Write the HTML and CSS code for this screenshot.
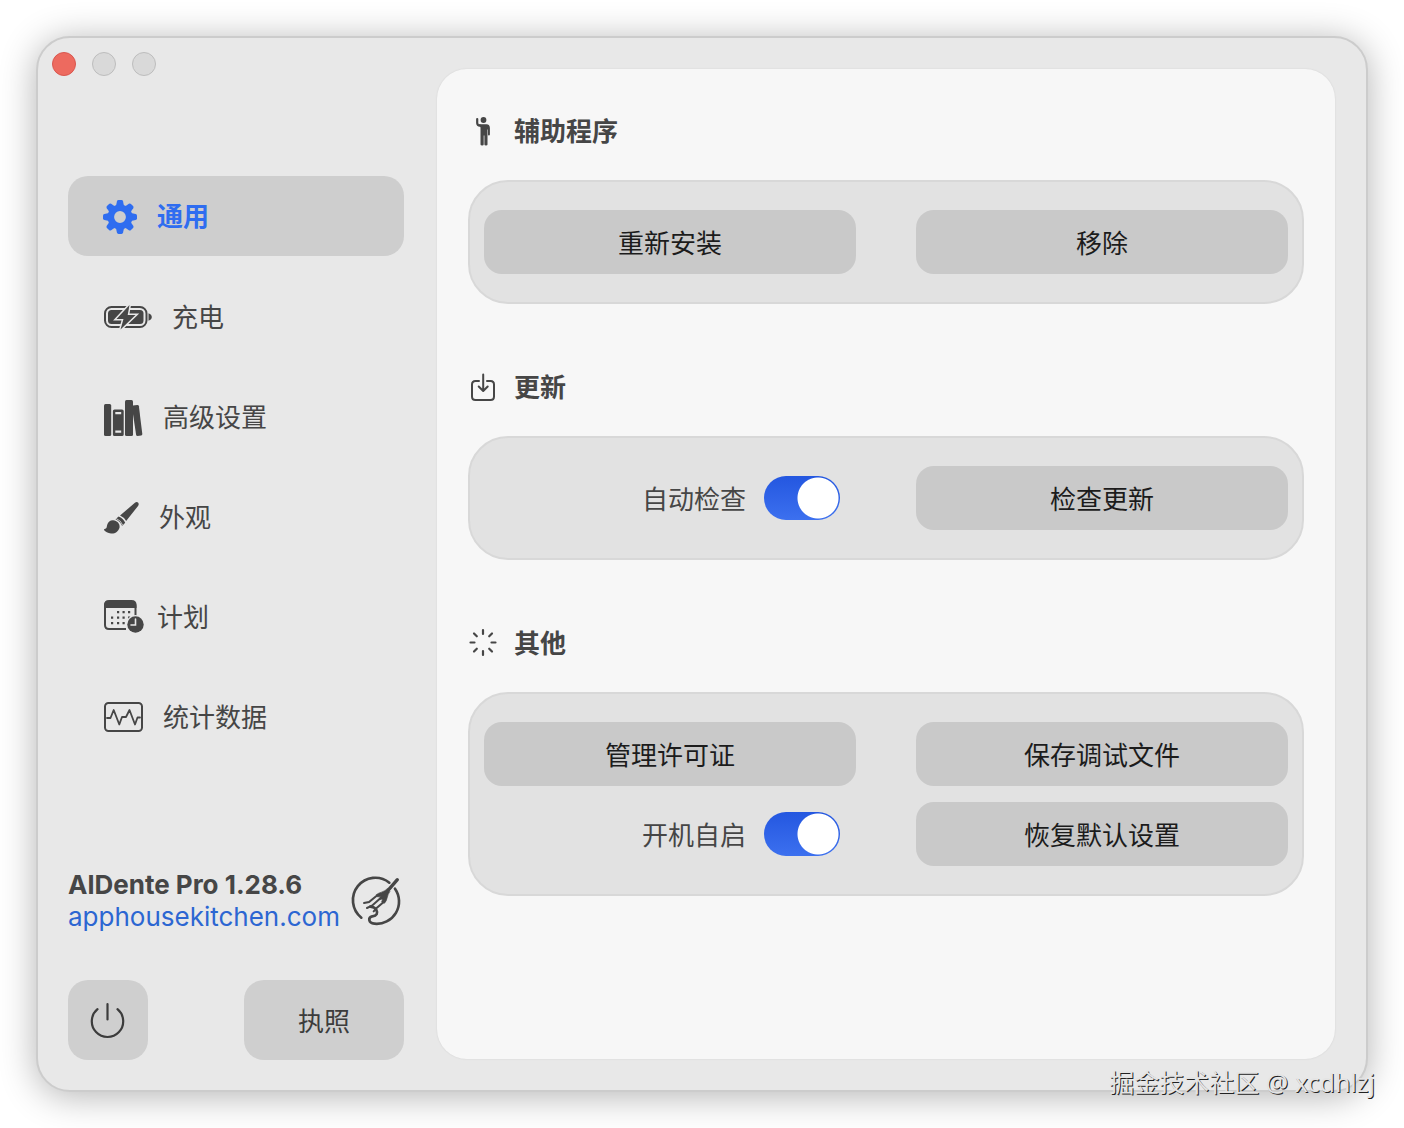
FILE: index.html
```html
<!DOCTYPE html>
<html lang="zh-CN">
<head>
    <meta charset="UTF-8">
    <meta name="viewport" content="width=device-width, initial-scale=1.0">
    <title>AlDente Pro</title>
    <link rel="stylesheet" href="styles.css">
</head>
<body>

    <div class="window">
        <aside class="sidebar">
            <div class="traffic-lights">
                <button class="light light-close" aria-label="关闭"></button>
                <button class="light" aria-label="最小化"></button>
                <button class="light" aria-label="缩放"></button>
            </div>

            <nav class="nav">
                <a href="#general" class="nav-item active">
                    <svg width="34" height="34" viewBox="0 0 34 34" fill="currentColor">
                        <path id="tooth" d="M13 6 L13.9 1.4 Q14.2 0 15.5 0 H18.5 Q19.8 0 20.1 1.4 L21 6 Z"/>
                        <use href="#tooth" transform="rotate(45 17 17)"/>
                        <use href="#tooth" transform="rotate(90 17 17)"/>
                        <use href="#tooth" transform="rotate(135 17 17)"/>
                        <use href="#tooth" transform="rotate(180 17 17)"/>
                        <use href="#tooth" transform="rotate(225 17 17)"/>
                        <use href="#tooth" transform="rotate(270 17 17)"/>
                        <use href="#tooth" transform="rotate(315 17 17)"/>
                        <circle cx="17" cy="17" r="9.2" fill="none" stroke="currentColor" stroke-width="6.6"/>
                    </svg>
                    <span>通用</span>
                </a>
                <a href="#charge" class="nav-item">
                    <svg width="48" height="24" viewBox="0 0 48 24">
                        <rect x="1" y="1" width="41.5" height="20" rx="6.5" fill="none" stroke="currentColor" stroke-width="2"/>
                        <rect x="4" y="4" width="35.5" height="14" rx="3.5" fill="currentColor"/>
                        <path d="M44.5 7.2 Q47.8 8.5 47.8 11 Q47.8 13.5 44.5 14.8 Z" fill="currentColor"/>
                        <path class="bolt" d="M25.5 -1 L12.5 13 H19.5 L16.5 23.5 L31.5 9 H23.7 Z" fill="currentColor"/>
                    </svg>
                    <span>充电</span>
                </a>
                <a href="#advanced" class="nav-item">
                    <svg width="39" height="38" viewBox="0 0 39 38" fill="currentColor">
                        <rect x="0" y="5" width="7.2" height="32" rx="1.5"/>
                        <path fill-rule="evenodd" d="M10.5 10.5 H18 Q19.7 10.5 19.7 12 V35.5 Q19.7 37 18 37 H10.5 Q8.9 37 8.9 35.5 V12 Q8.9 10.5 10.5 10.5 Z M11.3 13 V15.2 H17.2 V13 Z M11.3 31.5 V33.7 H17.2 V31.5 Z"/>
                        <rect x="21" y="1" width="8" height="36" rx="1.5"/>
                        <path d="M29 6.5 L33.3 6 Q34.7 5.9 34.9 7.2 L38.3 35 Q38.4 36.3 37.2 36.5 L33.5 37 Q32.3 37 32.1 35.8 L29 15 Z"/>
                    </svg>
                    <span>高级设置</span>
                </a>
                <a href="#appearance" class="nav-item">
                    <svg width="35" height="34" viewBox="0 0 36 34" fill="currentColor">
                        <path d="M16.5 14.5 L31.8 1.3 Q33.8 0 35.2 1.3 Q36.3 2.7 35 4.6 L22.8 20.2 Q21 16.5 16.5 14.5 Z"/>
                        <path d="M15 15.5 Q19.9 17.5 21.8 22 L18.6 25.3 Q16.8 20.3 11.8 18.3 Z"/>
                        <path d="M9.3 19.3 C13.5 19.5 16.7 23 16 26.8 C15 31 11 33.5 7.2 33 C4 32.7 1.3 31 .2 29.6 C-.3 28.7 .3 28.2 1.3 28.1 C3 27.9 2.7 26 3.3 24 C4.1 21 6.3 19.2 9.3 19.3 Z"/>
                        <path d="M12.5 17.5 Q17.5 19.5 19.5 24.8" fill="none" stroke="#e8e8e8" stroke-width=".8"/>
                    </svg>
                    <span>外观</span>
                </a>
                <a href="#schedule" class="nav-item">
                    <svg class="wide-icon" width="33" height="34" viewBox="0 0 33 34" fill="currentColor">
                        <path d="M31.5 15 V5 Q31.5 1 27.5 1 H5 Q1 1 1 5 V24 Q1 28 5 28 H22" fill="none" stroke="currentColor" stroke-width="2"/>
                        <path d="M0 7 V4 Q0 -1 5 -1 H27.5 Q32.5 -1 32.5 4 V7 Z"/>
                        <path d="M13 10h2.2v2.2h-2.2z M18.5 10h2.2v2.2h-2.2z M24 10h2.2v2.2h-2.2z M7 15.5h2.2v2.2h-2.2z M13 15.5h2.2v2.2h-2.2z M18.5 15.5h2.2v2.2h-2.2z M24 15.5h2.2v2.2h-2.2z M7 21h2.2v2.2h-2.2z M13 21h2.2v2.2h-2.2z M18.5 21h2.2v2.2h-2.2z"/>
                        <circle cx="31.5" cy="23.5" r="9.5" fill="#e8e8e8"/>
                        <circle cx="31.5" cy="23.5" r="8.2"/>
                        <path d="M31.5 18 V24 H27" fill="none" stroke="#e8e8e8" stroke-width="1.6" stroke-linecap="round"/>
                    </svg>
                    <span>计划</span>
                </a>
                <a href="#stats" class="nav-item">
                    <svg class="wide-icon" width="39" height="30" viewBox="0 0 39 30" fill="none" stroke="currentColor" stroke-width="2" stroke-linejoin="round" stroke-linecap="round">
                        <rect x="1" y="0" width="37" height="28" rx="3.5"/>
                        <path d="M3 15 H6.5 L9.7 7 L15.3 21.5 L18 14 H22 L25.5 7 L31 21.5 L33.5 14.5 H36" stroke-width="1.8"/>
                    </svg>
                    <span>统计数据</span>
                </a>
            </nav>

            <div class="about">
                <div class="about-text">
                    <strong>AlDente Pro 1.28.6</strong>
                    <a href="#site">apphousekitchen.com</a>
                </div>
                <svg class="logo" width="50" height="50" viewBox="30 28 150 150" fill="none" stroke="currentColor" stroke-width="8" stroke-linecap="round">
                    <path d="M61 153 A67 67 0 0 1 145 48"/>
                    <path d="M162 66 A67 67 0 0 1 100 171 C82 169 80 153 94 149 C108 147 111 139 106 130 C103 124 97 121 88 120"/>
                    <path d="M169 39 L136 77" stroke-width="10"/>
                    <path d="M139 66 C130 77 115 76 106 84 L110 91 L118 89 L115 99 L125 97 L122 106 L130 110 C140 101 137 87 146 75 Z" fill="currentColor" stroke-width="2"/>
                    <path d="M109 86 L84 106 L69 109 M118 95 L93 117 L78 124 M128 106 L107 124 L98 134" stroke-width="6"/>
                </svg>
            </div>

            <div class="actions">
                <button class="side-button power" aria-label="退出">
                    <svg width="36" height="38" viewBox="0 0 36 38" fill="none" stroke="currentColor" stroke-width="2.2" stroke-linecap="round">
                        <path d="M17.5 3 V18.5"/>
                        <path d="M7.5 8.2 A15.7 15.7 0 1 0 27.5 8.2"/>
                    </svg>
                </button>
                <button class="side-button license">执照</button>
            </div>
        </aside>

        <main class="panel">
            <section>
                <h2>
                    <svg width="30" height="30" viewBox="0 0 30 30" fill="currentColor">
                        <circle cx="15.5" cy="3" r="2.9"/>
                        <path d="M9.2 2 V6 Q9.3 8.5 12 8.7" fill="none" stroke="currentColor" stroke-width="2.2" stroke-linecap="round"/>
                        <path d="M10.5 7.3 H18.5 Q21.9 7.5 21.9 11 V17.5 Q21.9 18.5 20.9 18.5 Q20 18.5 20 17.5 V12.5 H19.5 V27.5 Q19.5 28.5 18 28.5 Q16.4 28.5 16.4 27.5 V18.5 H15.7 V27.5 Q15.7 28.5 14.2 28.5 Q12.5 28.5 12.5 27.5 V10.5 Z"/>
                    </svg>
                    辅助程序
                </h2>
                <div class="card">
                    <button class="button">重新安装</button>
                    <button class="button">移除</button>
                </div>
            </section>

            <section>
                <h2>
                    <svg width="30" height="30" viewBox="0 0 30 30" fill="none" stroke="currentColor" stroke-width="2" stroke-linecap="round" stroke-linejoin="round">
                        <path d="M11 8 H7.5 Q4 8 4 11.5 V23.5 Q4 27 7.5 27 H22.5 Q26 27 26 23.5 V11.5 Q26 8 22.5 8 H19"/>
                        <path d="M15.2 1.5 V17.5 M10.7 13.5 L15.2 18 L19.7 13.5"/>
                    </svg>
                    更新
                </h2>
                <div class="card">
                    <label class="toggle-row"><span>自动检查</span> <input type="checkbox" class="toggle" checked></label>
                    <button class="button">检查更新</button>
                </div>
            </section>

            <section>
                <h2>
                    <svg width="30" height="30" viewBox="0 0 30 30" fill="none" stroke="currentColor" stroke-width="2.2" stroke-linecap="round">
                        <path d="M15 1 V5 M15 22 V26 M2.5 13.5 H6.5 M23.5 13.5 H27.5 M6 4.5 L8.8 7.3 M24 4.5 L21.2 7.3 M6 22.5 L8.8 19.7 M24 22.5 L21.2 19.7"/>
                    </svg>
                    其他
                </h2>
                <div class="card">
                    <button class="button">管理许可证</button>
                    <button class="button">保存调试文件</button>
                    <label class="toggle-row"><span>开机自启</span> <input type="checkbox" class="toggle" checked></label>
                    <button class="button">恢复默认设置</button>
                </div>
            </section>
        </main>
    </div>

    <div class="watermark">掘金技术社区 @ xcdhlzj</div>

</body>
</html>
```
FILE: styles.css
```css
* {
    box-sizing: border-box;
}
body {
    position: relative;
    display: flex;
    min-height: 100vh;
    margin: 0;
    padding: 36px;
    background-color: #ffffff;
    font-family: Inter, "Noto Sans CJK SC", sans-serif;
    font-size: 26px;
    line-height: 32px;
    color: #464646;
}
button {
    padding: 0;
    border: none;
    font: inherit;
    color: inherit;
    cursor: pointer;
}
a {
    text-decoration: none;
    color: inherit;
}
svg {
    flex-shrink: 0;
    overflow: visible;
}
.window {
    flex: 1;
    display: flex;
    background-color: #e8e8e8;
    border: 2px solid #cccccc;
    border-radius: 34px;
    box-shadow: 0 4px 36px rgba(0, 0, 0, 0.3);
}
.sidebar {
    display: flex;
    flex-direction: column;
    width: 399px;
    padding: 14px 33px 30px 30px;
}
.traffic-lights {
    display: flex;
    gap: 16px;
    margin: 0 0 100px -16px;
}
.light {
    width: 24px;
    height: 24px;
    border: 1px solid #bdbdbd;
    border-radius: 50%;
    background-color: #d9d9d9;
}
.light-close {
    border-color: #d9574f;
    background-color: #ed6a5f;
}
.nav {
    display: flex;
    flex-direction: column;
    gap: 20px;
}
.nav-item {
    display: flex;
    align-items: center;
    gap: 20px;
    height: 80px;
    padding: 3px 36px 0;
    border-radius: 20px;
}
.nav-item.active {
    padding: 2px 35px 0;
    background-color: #cecece;
    color: #2f6df0;
    font-weight: bold;
}
.bolt {
    stroke: #e8e8e8;
    stroke-width: 3px;
    paint-order: stroke;
}
.about {
    display: flex;
    align-items: center;
    justify-content: space-between;
    margin-top: auto;
    margin-bottom: 47px;
    padding-right: 3px;
}
.about-text {
    display: flex;
    flex-direction: column;
    white-space: nowrap;
}
.about-text a {
    color: #2c66d2;
}
.actions {
    display: flex;
    justify-content: space-between;
}
.side-button {
    display: flex;
    align-items: center;
    justify-content: center;
    height: 80px;
    border-radius: 20px;
    background-color: #cfcfcf;
    color: #3c3c3c;
}
.power {
    width: 80px;
}
.license {
    width: 160px;
    padding-top: 3px;
}
.panel {
    flex: 1;
    margin: 31px 31px 31px 0;
    padding: 47px 31px;
    border-radius: 30px;
    background-color: #f7f7f7;
    box-shadow: 0 0 2px rgba(0, 0, 0, 0.1);
}
section {
    margin-bottom: 68px;
}
h2 {
    display: flex;
    align-items: center;
    gap: 16px;
    margin: 0 0 32px;
    font-size: 26px;
    font-weight: bold;
}
.card {
    display: grid;
    grid-template-columns: 1fr 1fr;
    gap: 16px 60px;
    padding: 28px 14px;
    border: 2px solid #d8d8d8;
    border-radius: 40px;
    background-color: #e2e2e2;
}
.button {
    height: 64px;
    padding-top: 3px;
    border-radius: 18px;
    background-color: #c9c9c9;
    color: #1c1c1c;
}
.toggle-row {
    display: flex;
    align-items: center;
    justify-content: flex-end;
    gap: 18px;
    padding-right: 16px;
}
.toggle-row span {
    padding-top: 3px;
}
.toggle {
    appearance: none;
    width: 76px;
    height: 44px;
    margin: 0;
    border-radius: 22px;
    background: radial-gradient(circle at 54px 22px, #ffffff 20px, transparent 21px), linear-gradient(#2457e0, #3c70ef);
    cursor: pointer;
}
.toggle:not(:checked) {
    background: radial-gradient(circle at 22px 22px, #ffffff 20px, transparent 21px), #bdbdbd;
}
.watermark {
    position: absolute;
    right: 29px;
    bottom: 30px;
    font-family: "Noto Sans", "Noto Sans CJK SC", sans-serif;
    font-size: 25px;
    color: #e4e4e4;
    text-shadow: 1px 1px 0 #222222;
}
```
